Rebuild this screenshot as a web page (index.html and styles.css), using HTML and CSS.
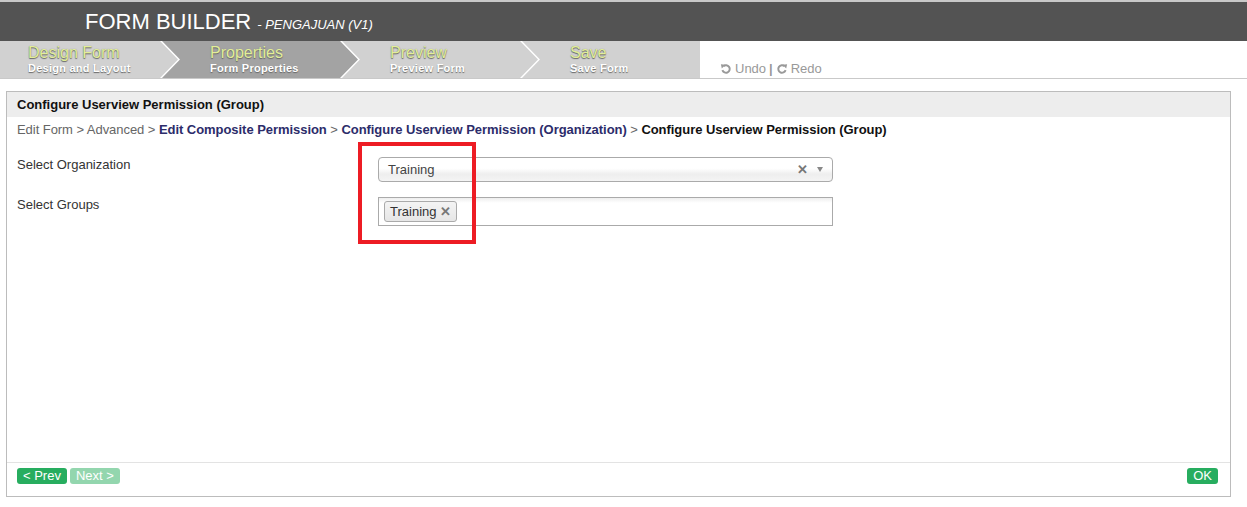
FILE: index.html
```html
<!DOCTYPE html>
<html>
<head>
<meta charset="utf-8">
<link rel="stylesheet" href="styles.css">
</head>
<body>
<div class="topbar">
  <span class="title">FORM BUILDER</span><span class="subtitle">- PENGAJUAN (V1)</span>
</div>
<div class="stepsbar">
  <div class="step first"><div class="st">Design Form</div><div class="ss">Design and Layout</div></div>
  <div class="step mid active"><div class="st">Properties</div><div class="ss">Form Properties</div></div>
  <div class="step mid"><div class="st">Preview</div><div class="ss">Preview Form</div></div>
  <div class="step last"><div class="st">Save</div><div class="ss">Save Form</div></div>
  <div class="undoredo">
    <svg class="ic" viewBox="0 0 16 16" width="12" height="12"><path d="M3.2 9.5 A5 5 0 1 0 4.6 4.2" fill="none" stroke="#999" stroke-width="2.6"/><path d="M1.2 1.5 L7.2 2.2 L2.4 7.2 Z" fill="#999"/></svg><span>Undo</span><span class="sep">|</span><svg class="ic" viewBox="0 0 16 16" width="12" height="12"><path d="M12.8 9.5 A5 5 0 1 1 11.4 4.2" fill="none" stroke="#999" stroke-width="2.6"/><path d="M14.8 1.5 L8.8 2.2 L13.6 7.2 Z" fill="#999"/></svg><span>Redo</span>
  </div>
</div>
<div class="panel">
  <div class="panel-head">Configure Userview Permission (Group)</div>
  <div class="crumbs"><span class="c-gray">Edit Form &gt; Advanced &gt; </span><span class="c-link">Edit Composite Permission</span><span class="c-gray"> &gt; </span><span class="c-link">Configure Userview Permission (Organization)</span><span class="c-gray"> &gt; </span><span class="c-cur">Configure Userview Permission (Group)</span></div>
  <div class="form">
    <div class="row">
      <div class="label">Select Organization</div>
      <div class="field">
        <div class="select">
          <span class="sel-text">Training</span>
          <span class="sel-x">✕</span>
          <span class="sel-arrow"></span>
        </div>
      </div>
    </div>
    <div class="row">
      <div class="label">Select Groups</div>
      <div class="field">
        <div class="multi">
          <span class="tag">Training <span class="tag-x">✕</span></span>
        </div>
      </div>
    </div>
    <div class="highlight"></div>
  </div>
  <div class="foot">
    <div class="navs"><span class="btn">&lt; Prev</span><span class="btn dis">Next &gt;</span></div>
    <span class="btn">OK</span>
  </div>
</div>
</body>
</html>
```
FILE: styles.css
```css
* { box-sizing: border-box; }
html, body { margin: 0; padding: 0; background: #fff; }
body { font-family: "Liberation Sans", Arial, sans-serif; font-size: 13px; color: #333; width: 1247px; height: 507px; overflow: hidden; }

.topbar {
  height: 41px;
  border-top: 2px solid #c8c8c8;
  background: #535353;
  color: #fff;
  padding-left: 85px;
  display: flex;
  align-items: center;
}
.title { font-size: 22px; letter-spacing: 0; }
.subtitle { font-size: 13px; font-style: italic; margin-left: 6px; margin-top: 5px; }

.stepsbar {
  height: 38px;
  display: flex;
  background: #fff;
  border-bottom: 1px solid #c9c9c9;
}
.step {
  height: 37px;
  background: #d1d1d1;
  padding-top: 3px;
  padding-left: 48px;
  flex: none;
}
.step.first {
  width: 178px;
  padding-left: 28px;
  clip-path: polygon(0 0, 160px 0, 178px 50%, 160px 100%, 0 100%);
}
.step.mid {
  width: 196px;
  margin-left: -16px;
  clip-path: polygon(0 0, 178px 0, 196px 50%, 178px 100%, 0 100%, 18px 50%);
}
.step.last {
  width: 178px;
  margin-left: -16px;
  clip-path: polygon(0 0, 100% 0, 100% 100%, 0 100%, 18px 50%);
}
.step.active { background: #a3a3a3; }
.st {
  font-size: 16px;
  line-height: 18px;
  color: #e2ee98;
  text-shadow: 0 1px 1px #666, 0 0 1px #888;
}
.ss {
  font-size: 11px;
  font-weight: bold;
  color: #fff;
  line-height: 13px;
  letter-spacing: 0.25px;
  text-shadow: 0 1px 1px #666;
}
.undoredo {
  display: flex;
  align-items: center;
  padding-left: 20px;
  padding-top: 18px;
  color: #999;
  font-size: 13px;
}
.undoredo .ic { margin-right: 3px; }
.undoredo .sep { margin: 0 3px; font-weight: bold; }

.panel {
  margin: 12px 0 0 6px;
  width: 1225px;
  height: 406px;
  border: 1px solid #bcbcbc;
  display: flex;
  flex-direction: column;
}
.panel-head {
  height: 25px;
  background: #ededed;
  padding-left: 10px;
  display: flex;
  align-items: center;
  font-weight: bold;
  font-size: 13px;
  color: #111;
}
.crumbs {
  padding: 5px 0 0 10px;
  height: 24px;
  font-size: 13px;
  line-height: 16px;
  letter-spacing: -0.05px;
}
.c-gray { color: #666; }
.c-link { color: #2c2c6a; font-weight: bold; }
.c-cur { color: #111; font-weight: bold; }

.form { flex: 1; position: relative; padding-top: 16px; }
.row { display: flex; height: 40px; }
.label { width: 371px; padding-left: 10px; padding-top: 0; color: #333; }
.field { width: 455px; }
.select {
  height: 25px;
  border: 1px solid #aaa;
  border-radius: 4px;
  background: linear-gradient(#fff 0%, #fff 45%, #eee 70%, #f4f4f4 100%);
  display: flex;
  align-items: center;
  padding-left: 9px;
  color: #444;
}
.sel-text { flex: 1; }
.sel-x { color: #777; font-size: 13px; font-weight: bold; margin-right: 9px; }
.sel-arrow {
  width: 0; height: 0;
  border-left: 3px solid transparent;
  border-right: 3px solid transparent;
  border-top: 5px solid #888;
  margin-right: 9px;
}
.multi {
  height: 29px;
  border: 1px solid #aaa;
  background: linear-gradient(#eee 0, #fff 5px);
  padding: 3px 0 0 5px;
}
.tag {
  display: inline-flex;
  align-items: center;
  height: 21px;
  padding: 0 5px 0 5px;
  border: 1px solid #aaa;
  border-radius: 3px;
  background: linear-gradient(#f4f4f4, #e6e6e6);
  color: #333;
}
.tag-x { color: #777; font-size: 13px; font-weight: bold; margin-left: 4px; }
.highlight {
  position: absolute;
  left: 351px;
  top: 1px;
  width: 118px;
  height: 102px;
  border: 4px solid #ed1c24;
}

.foot {
  border-top: 1px solid #e3e3e3;
  height: 34px;
  display: flex;
  justify-content: space-between;
  align-items: flex-start;
  padding: 5px 12px 0 10px;
}
.navs { display: flex; gap: 3px; }
.btn {
  background: #27ad5f;
  color: #fff;
  font-size: 13px;
  line-height: 16px;
  padding: 0 6px;
  border-radius: 3px;
  display: inline-block;
}
.btn.dis { background: #93d6ae; }
```
